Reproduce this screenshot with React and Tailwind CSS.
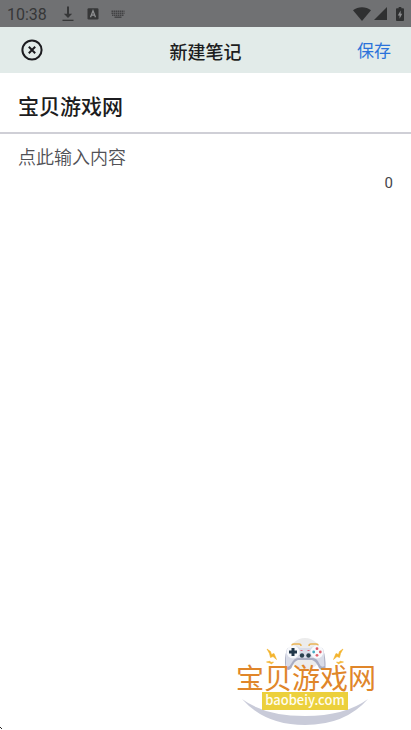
import { useState } from 'react'

function StatusBar() {
  return (
    <div className="flex h-[27px] items-center bg-[#707173] pl-[7px] pr-[7px] text-[#363738]">
      <span className="pt-0.5 font-['Roboto',sans-serif] text-base leading-5">10:38</span>
      <svg className="ml-[15px] h-4 w-3" viewBox="0 0 12 16" fill="currentColor" aria-hidden="true">
        <path d="M5 0.500h2v7.200h3.200L6 12 1.800 7.700H5z" />
        <path d="M0.500 13.700h11v1.300h-11z" />
      </svg>
      <svg className="ml-[13px] h-3 w-3" viewBox="0 0 12 12" aria-hidden="true">
        <rect x="0.500" y="0.300" width="11" height="11.200" rx="1.200" fill="currentColor" />
        <path d="M3.500 9.200L6 2.800l2.500 6.400M4.400 7.200h3.200" fill="none" stroke="#8f9092" strokeWidth="1.300" />
      </svg>
      <svg className="ml-3 h-2 w-[14px]" viewBox="0 0 14 8" fill="none" stroke="#424345" aria-hidden="true">
        <path d="M0.500 1.200h13M0.500 3.200h13M1 5.200h12" strokeWidth="1.400" strokeDasharray="1.500 0.500" />
        <path d="M3.500 7.200h7" strokeWidth="1.400" />
      </svg>
      <div className="ml-auto flex items-center text-[#2f3031]">
        <svg className="h-[14px] w-[18px]" viewBox="0 0 18 14" fill="currentColor" aria-hidden="true">
          <path d="M0 3.200C5-.8 13-.8 18 3.200L9 14z" />
        </svg>
        <svg className="ml-[3px] h-[13px] w-[13px]" viewBox="0 0 13 13" fill="currentColor" aria-hidden="true">
          <path d="M13 0v13H0z" />
        </svg>
        <svg className="ml-[9px] h-[14px] w-[8px]" viewBox="0 0 9 14" preserveAspectRatio="none" aria-hidden="true">
          <path d="M3 0h3v1.300h2q1 0 1 1V13q0 1-1 1H1q-1 0-1-1V2.300q0-1 1-1h2z" fill="currentColor" />
          <path d="M5.200 3.600L2 8.400h2v3.300l3-4.900H5.200z" fill="#8a8b8d" />
        </svg>
      </div>
    </div>
  )
}

function Bolt({ transform }) {
  return (
    <g transform={transform} fill="#f3b32c" stroke="#f3b32c" strokeWidth="0.600">
      <path d="M0 0l3.500 2.500 1 3L7 4.500 9.500 10.500 6 7.500 3.500 8.500 2.500 4.500z" />
      <path d="M-.5 13l3.500-.8.8 1.300 2.700-.5-2 2-1.500-1z" />
    </g>
  )
}

function Watermark() {
  return (
    <svg
      className="pointer-events-none absolute bottom-0 right-[26px] h-[100px] w-[155px] font-['Noto_Sans_CJK_SC',sans-serif]"
      viewBox="0 0 155 100"
      role="img"
      aria-label="宝贝游戏网 baobeiy.com"
    >
      <circle cx="75" cy="24" r="16" fill="#ececec" />
      <path d="M12 69Q35 86 75 86T138 69Q115 95 75 95T12 69z" fill="#c9cbd9" />
      {/* gamepad */}
      <path d="M62 15.500q0-1.500 2-1.500h5q2 0 2 2M79 16q0-2 2-2h5q2 0 2 1.500" fill="none" stroke="#eab455" strokeWidth="1.500" />
      <path d="M57 19Q61 15 69 18H81Q89 15 93 19Q96 28 95.500 38Q92 42 89 38Q86 31 82 30H68Q64 31 61.500 38Q58 42 55.500 38Q54 28 57 19z" fill="#a9adc2" />
      <path d="M56 23Q58 16 64 16Q68 16 70 18H80Q83 16 87 16Q92 16 94 23L94.500 36Q91 38 89.500 34Q87 28 83 28H68Q64 28 61 34Q59 38 56 36z" fill="#d9dce8" />
      <circle cx="63" cy="22" r="6.500" fill="#f8f9fc" />
      <circle cx="87" cy="22" r="6.500" fill="#f8f9fc" />
      <path d="M61.500 18h3v2.500h2.500v3h-2.500v2.500h-3v-2.500h-2.500v-3h2.500z" fill="#22384a" />
      <circle cx="72" cy="25.500" r="2.200" fill="#29404f" />
      <circle cx="78.500" cy="25.500" r="2.200" fill="#29404f" />
      <path d="M70.500 20.500h2M77.500 20.500h2" stroke="#d9667c" strokeWidth="1.200" />
      <circle cx="87" cy="18.700" r="1.400" fill="#df5964" />
      <circle cx="83.700" cy="22" r="1.400" fill="#46a8c0" />
      <circle cx="90.300" cy="22" r="1.400" fill="#e1616d" />
      <circle cx="87" cy="25.300" r="1.400" fill="#e1616d" />
      <Bolt transform="translate(37 19)" />
      <Bolt transform="translate(113 19) scale(-1 1)" />
      <text x="6" y="59" fontSize="28" fill="#e0862a">宝贝游戏网</text>
      <rect x="32" y="62" width="86" height="18" fill="#ecd03c" />
      <text x="75" y="75" fontSize="13" fontWeight="500" fill="#fffdf0" textAnchor="middle">baobeiy.com</text>
    </svg>
  )
}

export default function App() {
  const [title, setTitle] = useState('宝贝游戏网')
  const [content, setContent] = useState('')

  return (
    <div className="relative flex min-h-screen flex-col bg-white font-['Noto_Sans_CJK_SC',sans-serif] text-[#1c1c20]">
      <StatusBar />
      <header className="grid h-[46px] grid-cols-[1fr_auto_1fr] items-center bg-[#e2ebe9] px-5">
        <button type="button" aria-label="关闭" className="justify-self-start">
          <svg className="h-6 w-6" viewBox="0 0 24 24" fill="none" stroke="currentColor" strokeWidth="2" aria-hidden="true">
            <circle cx="12" cy="12" r="9.600" />
            <path d="M8.800 8.800l6.400 6.400M15.200 8.800l-6.400 6.400" />
          </svg>
        </button>
        <h1 className="pt-0.5 text-lg font-medium leading-6">新建笔记</h1>
        <button type="button" className="justify-self-end text-[17px] leading-6 text-[#2b72da]">保存</button>
      </header>

      <main className="flex flex-1 flex-col">
        <input
          type="text"
          aria-label="标题"
          value={title}
          onChange={(e) => setTitle(e.target.value)}
          className="h-[61px] w-full border-b-2 border-[#cfcfd6] px-[18px] pt-1 text-[21px] font-medium outline-none"
        />
        <textarea
          aria-label="内容"
          placeholder="点此输入内容"
          rows={1}
          value={content}
          onChange={(e) => setContent(e.target.value)}
          className="mt-2.5 block w-full resize-none overflow-hidden px-[18px] text-lg font-[350] leading-6 outline-none field-sizing-content placeholder:text-[#515156]"
        />
        <span className="mt-[5px] self-end pr-[18px] font-['Roboto',sans-serif] text-[15px] leading-5 text-[#45454a]">
          {content.length}
        </span>
      </main>

      <Watermark />
      <svg className="absolute bottom-0 left-0 h-1 w-1" viewBox="0 0 4 4" aria-hidden="true">
        <path d="M0 1h1v1H0zM1 2h1v1H1z" fill="#222" />
      </svg>
    </div>
  )
}
